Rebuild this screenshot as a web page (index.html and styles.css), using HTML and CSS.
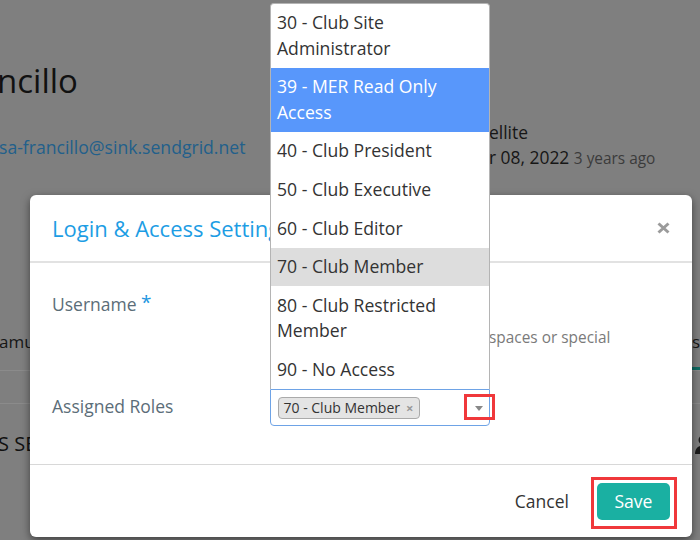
FILE: index.html
```html
<!DOCTYPE html>
<html lang="en">
<head>
<meta charset="utf-8">
<title>Login &amp; Access Settings</title>
<link rel="stylesheet" href="styles.css">
</head>
<body>
<div class="page">
  <header class="profile">
    <div class="identity">
      <h1 class="name">ncillo</h1>
      <a class="email">sa-francillo@sink.sendgrid.net</a>
    </div>
    <div class="meta">
      <div class="meta-line">ellite</div>
      <div class="meta-line">r 08, 2022 <span class="ago">3 years ago</span></div>
    </div>
  </header>
  <nav class="tabs">
    <span class="tab">amu</span>
    <span class="tab active">s</span>
  </nav>
  <div class="section-rule"></div>
  <div class="section-head">
    <h2 class="section-title">S SE</h2>
    <svg class="person" width="16" height="19" viewBox="0 0 16 19"><circle cx="8" cy="5" r="4.5" fill="#1a1a1a"/><path d="M0 19c0-6 3.5-8.5 8-8.5s8 2.5 8 8.5z" fill="#1a1a1a"/></svg>
  </div>
</div>

<div class="modal">
  <div class="modal-header">
    <h4 class="modal-title">Login &amp; Access Settings</h4>
    <button class="close" type="button" aria-label="Close">
      <svg width="13" height="12" viewBox="0 0 13 12"><path d="M1.5 1.5L11.5 10.5M11.5 1.5L1.5 10.5" stroke="#9b9b9b" stroke-width="3" fill="none"/></svg>
    </button>
  </div>
  <div class="modal-body">
    <div class="form-row">
      <label class="form-label">Username <span class="req">*</span></label>
      <div class="control">
        <input class="text-input" type="text">
        <p class="help">Username cannot contain any spaces or special characters.</p>
      </div>
    </div>
    <div class="form-row">
      <label class="form-label">Assigned Roles</label>
      <div class="control">
        <div class="select-wrap">
          <ul class="dropdown">
            <li>30 - Club Site Administrator</li>
            <li class="hl">39 - MER Read Only Access</li>
            <li>40 - Club President</li>
            <li>50 - Club Executive</li>
            <li>60 - Club Editor</li>
            <li class="sel">70 - Club Member</li>
            <li>80 - Club Restricted Member</li>
            <li>90 - No Access</li>
          </ul>
          <div class="selection">
            <span class="tag">70 - Club Member<span class="tag-x">×</span></span>
            <span class="arrow"><b></b></span>
          </div>
          <span class="annot annot-arrow"></span>
        </div>
      </div>
    </div>
  </div>
  <div class="modal-footer">
    <button class="btn-cancel" type="button">Cancel</button>
    <div class="save-wrap">
      <button class="btn-save" type="button">Save</button>
      <span class="annot annot-save"></span>
    </div>
  </div>
</div>
</body>
</html>
```

FILE: styles.css
```css
html, body {
  margin: 0;
  padding: 0;
}
body {
  width: 700px;
  height: 540px;
  overflow: hidden;
  background: #7f7f7f;
  font-family: "Open Sans", "Noto Sans", sans-serif;
  position: relative;
}

/* dimmed page behind the modal */
.page {
  color: #141414;
}
.profile {
  display: flex;
}
.identity {
  width: 489px;
  flex: none;
}
.name {
  margin: 58px 0 0 -3px;
  font-size: 33px;
  line-height: 45px;
  font-weight: 400;
  color: #111;
}
.email {
  display: block;
  margin: 32px 0 0 -1px;
  font-size: 17.6px;
  line-height: 24px;
  color: #22608b;
}
.meta {
  padding-top: 120px;
  font-size: 17.4px;
  line-height: 25px;
  color: #161616;
}
.ago {
  font-size: 15.4px;
  color: #3b3b3b;
}
.tabs {
  display: flex;
  justify-content: space-between;
  align-items: flex-end;
  margin-top: 158px;
  border-bottom: 1px solid #8b8b8b;
  font-size: 17px;
  line-height: 25px;
  color: #161616;
}
.tab {
  padding-bottom: 16px;
  margin-left: -1px;
}
.tab.active {
  padding-bottom: 13px;
  border-bottom: 3px solid #0e6a62;
  margin-left: 0;
}
.section-rule {
  margin-top: 32px;
  border-top: 1px solid #8b8b8b;
}
.section-head {
  display: flex;
  justify-content: space-between;
  align-items: center;
  margin-top: 26px;
}
.section-title {
  margin: 0 0 0 -2px;
  font-size: 20px;
  line-height: 27px;
  font-weight: 400;
  color: #111;
}
.person {
  margin-right: -11px;
  margin-top: 2px;
}

/* modal */
.modal {
  position: absolute;
  left: 30px;
  top: 195px;
  width: 662px;
  background: #fff;
  border-radius: 6px;
  box-shadow: 0 3px 9px rgba(0, 0, 0, 0.5);
}
.modal-header {
  display: flex;
  align-items: center;
  justify-content: space-between;
  padding: 17.5px 22px;
  border-bottom: 2px solid #e2e2e2;
}
.modal-title {
  margin: 0;
  font-size: 22px;
  line-height: 31px;
  font-weight: 400;
  color: #1d9de4;
  white-space: nowrap;
}
.close {
  display: flex;
  border: 0;
  background: none;
  padding: 0;
  margin: 0;
}
.modal-body {
  padding: 22px 22px 38px;
}
.form-row {
  display: flex;
}
.form-row + .form-row {
  margin-top: 20px;
}
.form-label {
  width: 218px;
  flex: none;
  padding-top: 4.7px;
  font-size: 17.5px;
  line-height: 24px;
  color: #5b6d78;
}
.req {
  color: #2196e0;
  font-size: 19px;
  vertical-align: 2px;
}
.control {
  flex: 1;
  min-width: 0;
}
.text-input {
  display: block;
  width: 220px;
  height: 37px;
  box-sizing: border-box;
  border: 1px solid #ccc;
  border-radius: 4px;
  margin: 0;
}
.help {
  margin: 5px 0 0;
  font-size: 15.4px;
  line-height: 21px;
  color: #7a7a7a;
}

/* select */
.select-wrap {
  position: relative;
  width: 220px;
}
.dropdown {
  position: absolute;
  left: 0;
  right: 0;
  bottom: 100%;
  margin: 0;
  padding: 0;
  list-style: none;
  background: #fff;
  border: 1px solid #b4b4b4;
  border-bottom: 0;
  border-radius: 4px 4px 0 0;
  font-size: 17.6px;
  line-height: 25.3px;
  color: #333;
}
.dropdown li {
  padding: 6.7px 6px;
}
.dropdown li.hl {
  background: #5897fb;
  color: #fff;
}
.dropdown li.sel {
  background: #dddddd;
}
.selection {
  display: flex;
  align-items: center;
  height: 37px;
  box-sizing: border-box;
  border: 1px solid #6ea3e6;
  border-radius: 0 0 4px 4px;
  padding-left: 6.5px;
}
.tag {
  display: inline-flex;
  align-items: center;
  height: 22px;
  box-sizing: border-box;
  border: 1px solid #aaa;
  border-radius: 4px;
  background: #e4e4e4;
  padding: 0 6px 0 5px;
  font-size: 14px;
  line-height: 20px;
  color: #333;
}
.tag-x {
  margin-left: 6px;
  color: #999;
  font-size: 13px;
  font-weight: 700;
}
.arrow {
  margin-left: auto;
  width: 20px;
  display: flex;
  justify-content: center;
  padding-top: 2px;
}
.arrow b {
  display: block;
  border-style: solid;
  border-color: #888 transparent transparent transparent;
  border-width: 5px 4px 0 4px;
}

/* annotation boxes */
.annot {
  position: absolute;
  box-sizing: border-box;
  border: 3px solid #f0383b;
}
.annot-arrow {
  left: 194px;
  top: 4.5px;
  width: 31px;
  height: 26px;
}
.annot-save {
  left: -6px;
  top: -6px;
  width: 86px;
  height: 52px;
}

/* footer */
.modal-footer {
  display: flex;
  justify-content: flex-end;
  align-items: center;
  gap: 16px;
  padding: 18px 22px 17px;
  border-top: 1px solid #d8d8d8;
}
.btn-cancel {
  border: 0;
  background: none;
  padding: 0 12px;
  margin: 0;
  font-family: inherit;
  font-size: 17.5px;
  line-height: 37px;
  color: #333;
}
.save-wrap {
  position: relative;
  display: flex;
}
.btn-save {
  border: 0;
  margin: 0;
  height: 37px;
  padding: 0 17.5px;
  border-radius: 5px;
  background: #1ab0a2;
  color: #fff;
  font-family: inherit;
  font-size: 17.6px;
  line-height: 37px;
}
```
